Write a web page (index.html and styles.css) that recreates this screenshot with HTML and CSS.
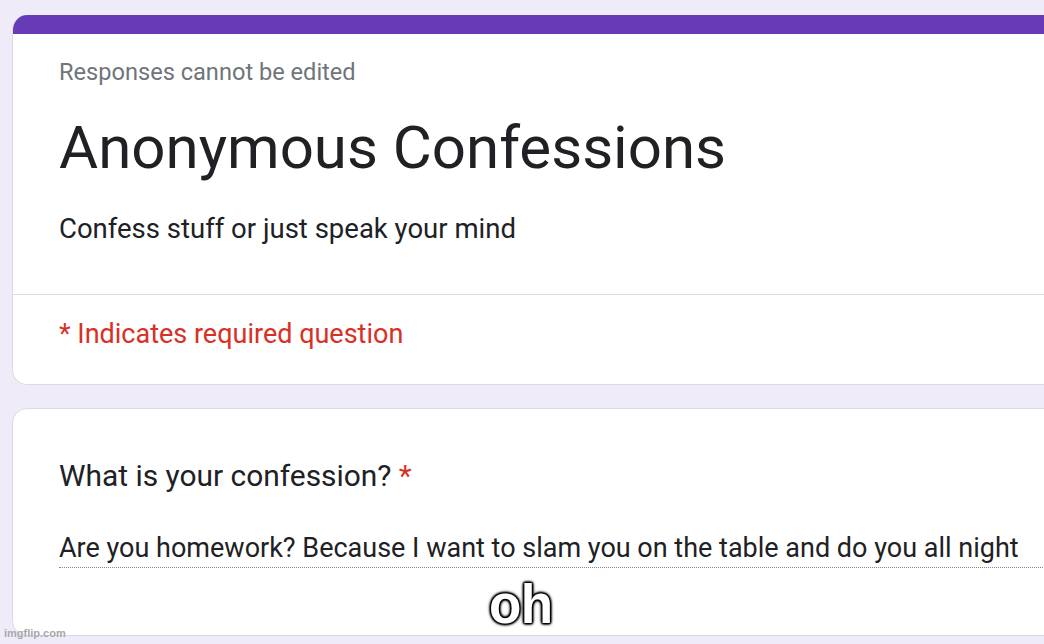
FILE: index.html
```html
<!DOCTYPE html>
<html>
<head>
<meta charset="utf-8">
<link rel="stylesheet" href="styles.css">
</head>
<body>
<div class="page">
  <div class="card card-head">
    <div class="topbar"></div>
    <div class="head">
      <div class="note">Responses cannot be edited</div>
      <h1 class="title">Anonymous Confessions</h1>
      <div class="desc">Confess stuff or just speak your mind</div>
    </div>
    <div class="required">* Indicates required question</div>
  </div>
  <div class="card card-q">
    <div class="question">What is your confession? <span class="star">*</span></div>
    <div class="answer">Are you homework? Because I want to slam you on the table and do you all night</div>
  </div>
</div>
<div class="meme">oh</div>
<div class="watermark">imgflip.com</div>
</body>
</html>
```
FILE: styles.css
```css
html, body {
  margin: 0;
  padding: 0;
  overflow: hidden;
  width: 1044px;
  height: 644px;
  background: #f0ebf8;
  font-family: Roboto, "Noto Sans", Arial, sans-serif;
  color: #202124;
}
.page {
  width: 1120px;
  padding: 15px 0 0 12px;
}
.card {
  background: #fff;
  border: 1px solid #dadce0;
  border-radius: 15px;
  overflow: hidden;
}
.card-head {
  border-top: none;
}
.topbar {
  height: 19px;
  background: #673ab7;
}
.head {
  padding: 23px 0 48px 46px;
  border-bottom: 1px solid #dadce0;
}
.note {
  font-size: 23.6px;
  line-height: 30px;
  color: #70757a;
}
.title {
  margin: 25px 0 0 0;
  font-size: 60px;
  line-height: 72px;
  font-weight: 400;
  color: #202124;
}
.desc {
  margin-top: 28px;
  font-size: 27.5px;
  line-height: 34px;
}
.required {
  padding: 22px 0 33px 46px;
  font-size: 27px;
  line-height: 34px;
  color: #d93025;
}
.card-q {
  margin-top: 23px;
  padding: 49px 0 67px 46px;
}
.question {
  font-size: 29.9px;
  line-height: 36px;
}
.star {
  color: #d93025;
}
.answer {
  margin-top: 37px;
  padding-bottom: 2px;
  font-size: 27px;
  line-height: 34px;
  border-bottom: 1px dotted #80868b;
}
.meme {
  position: absolute;
  left: 489px;
  top: 576px;
  font-family: "Liberation Sans", Arial, sans-serif;
  font-weight: bold;
  font-size: 53px;
  line-height: 60px;
  letter-spacing: -0.5px;
  color: #fff;
  transform: scaleY(1.06);
  transform-origin: left bottom;
  text-shadow: 0 0 2px #000, 0 0 2px #000, 0 0 3px #000, 1px 1px 2px #000, -1px -1px 2px #000, 1px -1px 2px #000, -1px 1px 2px #000, 0 0 4px #000;
}
.watermark {
  position: absolute;
  left: 4px;
  top: 627px;
  font-family: "Liberation Sans", Arial, sans-serif;
  font-weight: bold;
  font-size: 11px;
  color: #a8a8ac;
}
```
